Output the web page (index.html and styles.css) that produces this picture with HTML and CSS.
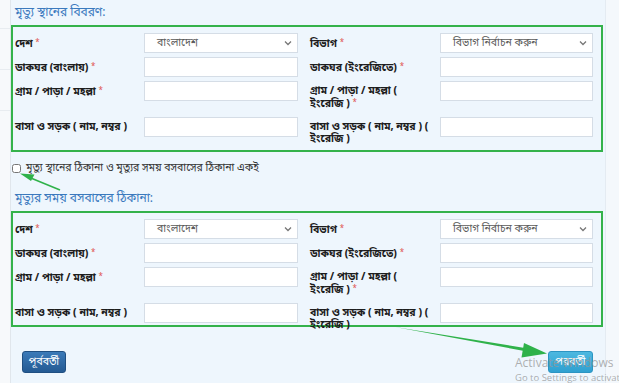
FILE: index.html
```html
<!DOCTYPE html>
<html lang="bn">
<head>
    <meta charset="UTF-8">
    <meta name="viewport" content="width=device-width, initial-scale=1.0">
    <title>মৃত্যু নিবন্ধন - ঠিকানা</title>
    <link rel="stylesheet" href="styles.css">
</head>
<body>

    <div class="sidebar">
        <div class="side-row"></div>
        <div class="side-row"></div>
        <div class="side-row"></div>
    </div>

    <div class="panel">
        <h2 class="section-title">মৃত্যু স্থানের বিবরণ:</h2>
        <div class="addr-box">
            <label class="field-label">দেশ <span class="req">*</span></label>
            <div class="select-box"><span>বাংলাদেশ</span><svg width="8" height="6" viewBox="0 0 8 6"><path d="M1 1.5 L4 4.5 L7 1.5" fill="none" stroke="#777" stroke-width="1.3"/></svg></div>
            <label class="field-label right">বিভাগ <span class="req">*</span></label>
            <div class="select-box"><span>বিভাগ নির্বাচন করুন</span><svg width="8" height="6" viewBox="0 0 8 6"><path d="M1 1.5 L4 4.5 L7 1.5" fill="none" stroke="#777" stroke-width="1.3"/></svg></div>

            <label class="field-label">ডাকঘর (বাংলায়) <span class="req">*</span></label>
            <input type="text">
            <label class="field-label right">ডাকঘর (ইংরেজিতে) <span class="req">*</span></label>
            <input type="text">

            <label class="field-label">গ্রাম / পাড়া / মহল্লা <span class="req">*</span></label>
            <input type="text">
            <label class="field-label right tall">গ্রাম / পাড়া / মহল্লা (<br>ইংরেজি ) <span class="req">*</span></label>
            <input type="text">

            <label class="field-label tall">বাসা ও সড়ক ( নাম, নম্বর )</label>
            <input type="text">
            <label class="field-label right tall">বাসা ও সড়ক ( নাম, নম্বর ) (<br>ইংরেজি )</label>
            <input type="text">
        </div>

        <label class="same-check">
            <input type="checkbox">
            <span>মৃত্যু স্থানের ঠিকানা ও মৃত্যুর সময় বসবাসের ঠিকানা একই</span>
        </label>

        <h2 class="section-title second">মৃত্যুর সময় বসবাসের ঠিকানা:</h2>
        <div class="addr-box">
            <label class="field-label">দেশ <span class="req">*</span></label>
            <div class="select-box"><span>বাংলাদেশ</span><svg width="8" height="6" viewBox="0 0 8 6"><path d="M1 1.5 L4 4.5 L7 1.5" fill="none" stroke="#777" stroke-width="1.3"/></svg></div>
            <label class="field-label right">বিভাগ <span class="req">*</span></label>
            <div class="select-box"><span>বিভাগ নির্বাচন করুন</span><svg width="8" height="6" viewBox="0 0 8 6"><path d="M1 1.5 L4 4.5 L7 1.5" fill="none" stroke="#777" stroke-width="1.3"/></svg></div>

            <label class="field-label">ডাকঘর (বাংলায়) <span class="req">*</span></label>
            <input type="text">
            <label class="field-label right">ডাকঘর (ইংরেজিতে) <span class="req">*</span></label>
            <input type="text">

            <label class="field-label">গ্রাম / পাড়া / মহল্লা <span class="req">*</span></label>
            <input type="text">
            <label class="field-label right tall">গ্রাম / পাড়া / মহল্লা (<br>ইংরেজি ) <span class="req">*</span></label>
            <input type="text">

            <label class="field-label short">বাসা ও সড়ক ( নাম, নম্বর )</label>
            <input type="text">
            <label class="field-label right short">বাসা ও সড়ক ( নাম, নম্বর ) (<br>ইংরেজি )</label>
            <input type="text">
        </div>

        <div class="nav-row">
            <button class="btn btn-prev">পূর্ববর্তী</button>
            <button class="btn btn-next">পরবর্তী</button>
        </div>
    </div>

    <div class="right-strip"></div>

    <!-- annotation arrows drawn over the form -->
    <svg class="arrows" width="619" height="383" viewBox="0 0 619 383">
        <path d="M60 190 L32 178.5" stroke="#2fb24a" stroke-width="1.6" fill="none"/>
        <path d="M20 173.5 L34.5 174.5 L31 181 Z" fill="#2fb24a"/>
        <path d="M395 327 L528 348.5 L527 351.5 Z" fill="#2fb24a"/>
        <path d="M547 353.5 L524 343 L521.5 357.5 Z" fill="#2fb24a"/>
    </svg>

    <div class="watermark">
        <div class="wm-title">Activate Windows</div>
        <div class="wm-sub">Go to Settings to activate Windows.</div>
    </div>

</body>
</html>
```

FILE: styles.css
```css
body {
    margin: 0;
    padding: 0;
    width: 619px;
    height: 383px;
    overflow: hidden;
    display: flex;
    background-color: #f7f9fb;
    font-family: "Noto Sans Bengali", "Noto Sans", sans-serif;
    color: #222;
    position: relative;
}

.sidebar {
    width: 10px;
    border-right: 1px solid #e0e6ec;
    padding-top: 28px;
}

.side-row {
    height: 40px;
    border-top: 1px solid #e8ecf0;
}

.panel {
    width: 594px;
    background-color: #eef6fd;
    display: flex;
    flex-direction: column;
}

.right-strip {
    flex: 1;
    border-left: 1px solid #e4ebf2;
    background-color: #f4f8fc;
}

.section-title {
    margin: 0 0 4px 0;
    padding: 5px 0 0 4px;
    font-size: 12px;
    line-height: 16px;
    font-weight: normal;
    color: #3a79bd;
}

.section-title.second {
    margin-top: 16px;
    padding-top: 0;
}

.addr-box {
    width: 592px;
    box-sizing: border-box;
    border: 2px solid #34b24b;
    padding: 6px 8px 0 2px;
    display: grid;
    grid-template-columns: 129px 154px 142px 153px;
    row-gap: 3px;
    align-items: start;
}

.field-label {
    font-size: 10.5px;
    font-weight: bold;
    line-height: 12px;
    padding: 4px 0 4px 0;
    color: #1d1d1d;
    white-space: nowrap;
}

.field-label.right {
    padding-left: 12px;
}

.field-label.tall {
    height: 25px;
}

.field-label.short {
    height: 14px;
}

.req {
    color: #e0524f;
    font-size: 8px;
    font-weight: normal;
    vertical-align: 2px;
}

input[type="text"], .select-box {
    height: 20px;
    box-sizing: border-box;
    border: 1px solid #d5dde6;
    background-color: white;
    margin: 0;
}

.select-box {
    display: flex;
    justify-content: space-between;
    align-items: center;
    padding: 0 5px 0 12px;
    font-size: 10.5px;
    color: #5a5a5a;
}

.same-check {
    display: flex;
    align-items: center;
    gap: 5px;
    margin-top: 9px;
    font-size: 10.5px;
    line-height: 14px;
    color: #333;
}

.same-check input {
    width: 9px;
    height: 9px;
    margin: 0 0 0 1px;
}

.nav-row {
    display: flex;
    justify-content: space-between;
    margin-top: 24px;
    padding: 0 12px 0 11px;
}

.btn {
    height: 22px;
    border: none;
    border-radius: 3px;
    color: white;
    font-family: inherit;
    font-size: 10.5px;
    padding: 0 4px;
}

.btn-prev {
    width: 44px;
    background: linear-gradient(#3b7ab8, #245a93);
    border: 1px solid #1f4f82;
}

.btn-next {
    width: 45px;
    background: linear-gradient(#4cb8e0, #2fa0d0);
    border: 1px solid #2b94c2;
}

.arrows {
    position: absolute;
    left: 0;
    top: 0;
    pointer-events: none;
}

.watermark {
    position: absolute;
    left: 515px;
    top: 355px;
    font-family: "Open Sans", sans-serif;
    color: rgba(120, 120, 120, 0.6);
    white-space: nowrap;
    pointer-events: none;
}

.wm-title {
    font-size: 12px;
    line-height: 16px;
    color: rgba(150, 150, 150, 0.75);
}

.wm-sub {
    font-size: 9.5px;
    line-height: 14px;
}
```
